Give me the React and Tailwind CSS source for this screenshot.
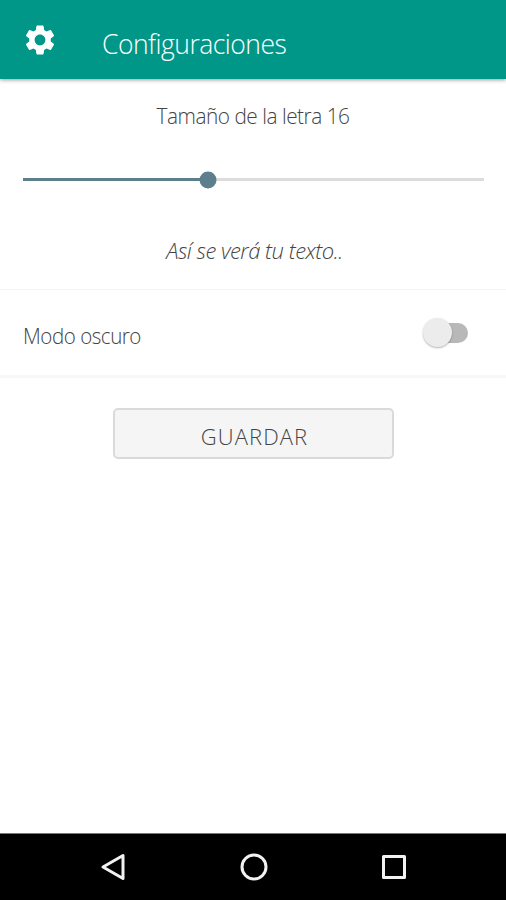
import { useState } from "react";
import { MdSettings } from "react-icons/md";

const Header = () => (
  <header className="relative flex h-[79px] shrink-0 items-center bg-[#009788] pl-[22px] text-white shadow-[0_1px_4px_rgba(0,0,0,0.4)]">
    <MdSettings className="size-[36px]" />
    <h1 className="mt-[7px] ml-[44px] origin-left scale-x-[0.98] text-[27px] leading-none font-light tracking-[-0.5px]">
      Configuraciones
    </h1>
  </header>
);

const FontSize = ({ size }) => {
  const percent = ((size - 8) / 20) * 100;

  return (
    <section className="flex h-[211px] shrink-0 flex-col items-center border-b border-[#f5f5f5] pr-[22px] pl-[23px]">
      <p className="mt-[23px] scale-x-[0.945] text-[22px] leading-[26px] font-light tracking-[-0.5px]">
        Tamaño de la letra {size}
      </p>
      <div className="relative mt-[50px] h-[3px] w-full bg-[#dcdcdc]">
        <div className="h-full bg-[#5d7e8c]" style={{ width: `${percent}%` }} />
        <div
          className="absolute top-1/2 ml-px size-[17px] -translate-1/2 rounded-full bg-[#5d7e8c]"
          style={{ left: `${percent}%` }}
        />
      </div>
      <p className="mt-[56px] pl-[2px] text-[22px] leading-[26px] font-light tracking-[-0.5px] italic">
        Así se verá tu texto..
      </p>
    </section>
  );
};

const DarkMode = ({ enabled, onToggle }) => (
  <section className="flex h-[88px] shrink-0 items-center justify-between border-b-[3px] border-[#f7f7f7] pr-[38px] pl-[23px]">
    <span className="mt-[5px] origin-left scale-x-[0.935] text-[22px] leading-[26px] font-light tracking-[-0.5px]">
      Modo oscuro
    </span>
    <button
      className="relative h-[20px] w-[41px] rounded-full bg-[#b8b8b8]"
      aria-pressed={enabled}
      onClick={onToggle}
    >
      <span className="absolute -top-[5px] -left-[4px] size-[29px] rounded-full bg-[#ececec] shadow-[0_1px_2px_rgba(0,0,0,0.3)]" />
    </button>
  </section>
);

const NavBar = () => (
  <nav className="mt-auto flex h-[67px] shrink-0 items-center justify-between border-t border-[#777] bg-black pr-[98px] pb-px pl-[99px]">
    <svg className="size-[28px]" viewBox="0 0 28 28" fill="none" stroke="#f2f2f2" strokeWidth="3" strokeLinejoin="round">
      <path d="M24 2.5V25.5L4 14Z" />
    </svg>
    <svg className="size-[28px]" viewBox="0 0 28 28" fill="none" stroke="#f2f2f2" strokeWidth="3">
      <circle cx="14" cy="14" r="12" />
    </svg>
    <svg className="size-[28px]" viewBox="0 0 28 28" fill="none" stroke="#f2f2f2" strokeWidth="3" strokeLinejoin="round">
      <rect x="3.5" y="3.5" width="21" height="21" />
    </svg>
  </nav>
);

const App = () => {
  const [dark, setDark] = useState(false);

  return (
    <div className="flex h-screen flex-col bg-white font-['Open_Sans',sans-serif] text-[#444]">
      <Header />
      <FontSize size={16} />
      <DarkMode enabled={dark} onToggle={() => setDark(!dark)} />
      <button className="mx-auto mt-[30px] h-[51px] w-[281px] shrink-0 rounded-[5px] border-2 border-[#dadada] bg-[#f5f5f5] pt-[4px] pl-[3px] text-[22px] leading-none font-light tracking-[1.1px]">
        GUARDAR
      </button>
      <NavBar />
    </div>
  );
};

export default App;
